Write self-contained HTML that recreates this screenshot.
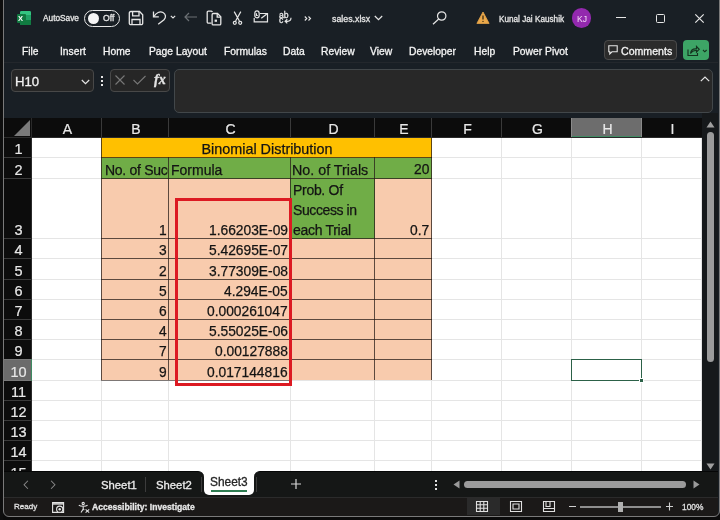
<!DOCTYPE html><html><head><meta charset="utf-8"><style>
*{margin:0;padding:0;box-sizing:border-box}
html,body{width:720px;height:520px;overflow:hidden;background:#0b0b0b}
body{position:relative;font-family:"Liberation Sans",sans-serif}
.a{position:absolute}
.t{position:absolute;white-space:nowrap;line-height:1;will-change:transform;-webkit-text-stroke:0.3px currentColor}
svg{position:absolute;overflow:visible}
.tab{color:#f4f4f4;font-size:10.3px}
.cell{will-change:transform;-webkit-text-stroke:0.25px currentColor;position:absolute;font-size:13.8px;color:#141414;line-height:1;white-space:nowrap}
.hd{will-change:transform;-webkit-text-stroke:0.2px currentColor;position:absolute;color:#e8e8e8;font-size:13px;line-height:1;white-space:nowrap;text-align:center}
</style></head><body>
<div class="a" style="left:0;top:0;width:3px;height:520px;background:#0e0e0e"></div>
<div class="a" style="left:3px;top:-6px;width:717px;height:523px;border-radius:6px;overflow:hidden;background:#191f25">
<div class="a" style="left:-3px;top:6px;width:720px;height:520px">
<div class="a" style="left:16px;top:11px;width:16px;height:14px"><div class="a" style="left:4px;top:0;width:11px;height:13.5px;background:#21a366;border-radius:1.5px"></div><div class="a" style="left:4px;top:0;width:11px;height:4px;background:#33c481;border-radius:1.5px 1.5px 0 0"></div><div class="a" style="left:4px;top:9px;width:11px;height:4.5px;background:#107c41;border-radius:0 0 1.5px 1.5px"></div><div class="a" style="left:1px;top:3px;width:8.5px;height:8.5px;background:#117a41;border-radius:1px"></div><div class="t" style="left:2.4px;top:3.9px;font-size:7.5px;color:#fff;font-weight:bold;-webkit-text-stroke:0">X</div></div>
<div class="t" style="left:43px;top:14.2px;font-size:8.3px;color:#e6e6e6">AutoSave</div>
<div class="a" style="left:84px;top:10px;width:36px;height:17px;border:1.2px solid #e6e6e6;border-radius:9px"></div>
<div class="a" style="left:87.5px;top:13px;width:11px;height:11px;border-radius:50%;background:#f4f4f4"></div>
<div class="t" style="left:102.5px;top:14px;font-size:8.6px;color:#e6e6e6">Off</div>
<svg style="left:128px;top:10px" width="16" height="16" viewBox="0 0 16 16" fill="none" stroke="#e6e6e6" stroke-width="1.3"><path d="M1.3 3a1.5 1.5 0 0 1 1.5-1.5h8.7l3.2 3.2v8.5a1.5 1.5 0 0 1-1.5 1.5h-10.4a1.5 1.5 0 0 1-1.5-1.5z"/><path d="M4.6 1.5v4.4h6.4v-4.4"/><path d="M4 14.7v-5.2h8v5.2"/></svg>
<svg style="left:152px;top:10px" width="16" height="16" viewBox="0 0 16 16" fill="none" stroke="#e6e6e6" stroke-width="1.3"><path d="M1.5 1.6V6.9H6.8"/><path d="M2 6.5C4 2.7 8 1 11 2.5C14 4.2 14.2 7.3 12 9.8L6.2 14.2"/></svg>
<svg style="left:169.5px;top:15px" width="6" height="4" viewBox="0 0 6 4" fill="none" stroke="#e6e6e6" stroke-width="1.1"><path d="M0.8 0.9L3 3L5.2 0.9"/></svg>
<svg style="left:184px;top:12px" width="14" height="10" viewBox="0 0 14 10" fill="none" stroke="#6c7075" stroke-width="1.2"><path d="M13 5H1M5 1L1 5L5 9"/></svg>
<svg style="left:206px;top:10px" width="17" height="16" viewBox="0 0 17 16" fill="none" stroke="#e6e6e6" stroke-width="1.3"><path d="M6.3 2.2A1.2 1.2 0 0 0 5.3 1.2H2.4A1.2 1.2 0 0 0 1.2 2.4V12a1.2 1.2 0 0 0 1.2 1.2h3"/><path d="M7.3 3.5h4.2l3.3 3.3v6.9a1.2 1.2 0 0 1-1.2 1.2H7.3a1.2 1.2 0 0 1-1.2-1.2V4.7a1.2 1.2 0 0 1 1.2-1.2z"/><path d="M11.2 3.5v3.6h3.6"/><rect x="8.6" y="9.6" width="2.4" height="2.2" fill="#e6e6e6" stroke="none"/></svg>
<svg style="left:232px;top:11px" width="11" height="14" viewBox="0 0 11 14" fill="none" stroke="#e6e6e6" stroke-width="1.2"><path d="M2.2 0.6L7.4 10M8.8 0.6L3.6 10"/><circle cx="2.8" cy="11.8" r="1.5"/><circle cx="8.2" cy="11.8" r="1.5"/></svg>
<svg style="left:253px;top:10px" width="16" height="13" viewBox="0 0 16 13" fill="none" stroke="#e6e6e6" stroke-width="1.2"><path d="M7 3.5H14.5V11.8H1.2V8"/><path d="M8.3 8.2L13.8 4"/><path d="M4 0.9C5.6 0.9 6.2 2 6.2 3.8V5.5C6.2 7 5.5 7.8 4 7.8C2.5 7.8 1.8 7 1.8 5.5V3.8C1.8 2 2.4 0.9 4 0.9z"/><path d="M3.4 3.2V5.5H4.8"/></svg>
<div class="t" style="left:279.3px;top:10.6px;font-size:8.6px;color:#e6e6e6">ab</div>
<div class="t" style="left:279.3px;top:16.4px;font-size:8.6px;color:#e6e6e6">c</div>
<svg style="left:284px;top:17px" width="8" height="7" viewBox="0 0 8 7" fill="none" stroke="#e6e6e6" stroke-width="1.2"><path d="M7 0.8C7 3.5 5.5 4.3 3.5 4.3H1.2M3.3 2.2L1.1 4.3L3.3 6.4"/></svg>
<svg style="left:304px;top:16px" width="8" height="5" viewBox="0 0 8 5" fill="none" stroke="#e6e6e6" stroke-width="1.1"><path d="M0.8 0.5L2.8 2.5L0.8 4.5M4.5 0.5L6.5 2.5L4.5 4.5"/></svg>
<div class="t" style="left:332px;top:15px;font-size:8.8px;color:#e6e6e6">sales.xlsx</div>
<svg style="left:374px;top:15px" width="9" height="6" viewBox="0 0 9 6" fill="none" stroke="#e6e6e6" stroke-width="1.2"><path d="M0.8 1L4.5 4.6L8.2 1"/></svg>
<svg style="left:432px;top:11px" width="15" height="14" viewBox="0 0 15 14" fill="none" stroke="#e6e6e6" stroke-width="1.2"><circle cx="9.7" cy="5" r="4.2"/><path d="M6.7 8L1 13.2"/></svg>
<svg style="left:476px;top:11px" width="14" height="13" viewBox="0 0 14 13"><path d="M7 1L13.1 12.4H0.9z" fill="#eba84a" stroke="#eba84a" stroke-width="0.8" stroke-linejoin="round"/><path d="M7 4.5v4" stroke="#3a2a10" stroke-width="1.3"/><circle cx="7" cy="10.4" r="0.7" fill="#3a2a10"/></svg>
<div class="t" style="left:498.5px;top:16px;font-size:8.2px;color:#e6e6e6">Kunal Jai Kaushik</div>
<div class="a" style="left:571.6px;top:8px;width:19.8px;height:20px;border-radius:50%;background:#9329ae"></div>
<div class="t" style="left:577px;top:14.6px;font-size:8.6px;color:#f3dcf6;-webkit-text-stroke:0">KJ</div>
<div class="a" style="left:616px;top:17px;width:10px;height:1.2px;background:#e6e6e6"></div>
<div class="a" style="left:656px;top:14px;width:9px;height:9px;border:1.2px solid #e6e6e6;border-radius:1.5px"></div>
<svg style="left:695px;top:13.5px" width="9" height="9" viewBox="0 0 9 9" stroke="#e6e6e6" stroke-width="1.2"><path d="M0.3 0.3L8.7 8.7M8.7 0.3L0.3 8.7"/></svg>
<div class="t tab" style="left:22px;top:47px">File</div>
<div class="t tab" style="left:60px;top:47px">Insert</div>
<div class="t tab" style="left:103px;top:47px">Home</div>
<div class="t tab" style="left:149px;top:47px">Page Layout</div>
<div class="t tab" style="left:224px;top:47px">Formulas</div>
<div class="t tab" style="left:283px;top:47px">Data</div>
<div class="t tab" style="left:321px;top:47px">Review</div>
<div class="t tab" style="left:370px;top:47px">View</div>
<div class="t tab" style="left:409px;top:47px">Developer</div>
<div class="t tab" style="left:474px;top:47px">Help</div>
<div class="t tab" style="left:513px;top:47px">Power Pivot</div>
<div class="a" style="left:604px;top:40px;width:73px;height:20px;border:1px solid #4a4a4a;border-radius:4px;background:#2b2b2b"></div>
<svg style="left:607.5px;top:44.5px" width="10" height="10" viewBox="0 0 10 10" fill="none" stroke="#e6e6e6" stroke-width="1.1"><path d="M0.8 0.8h8.4v6H4L1.8 9V6.8H0.8z"/></svg>
<div class="t tab" style="left:621px;top:45.5px;font-size:10.6px">Comments</div>
<div class="a" style="left:683px;top:40px;width:26px;height:20px;border-radius:4px;background:#3da566"></div>
<svg style="left:687px;top:45px" width="21" height="11" viewBox="0 0 21 11" fill="none" stroke="#15341f" stroke-width="1.15"><path d="M1 4.5v6h9.5V8"/><path d="M3.5 8.5C3.8 5.5 5.5 3.8 8.5 3.8h1V1.5L12.2 4.3L9.5 7V5.5h-1C6.5 5.5 4.8 6.5 3.5 8.5z"/><path d="M16 5l1.8 1.8L19.6 5"/></svg>
<div class="a" style="left:4px;top:62px;width:714px;height:1px;background:#23272c"></div>
<div class="a" style="left:11px;top:69px;width:83px;height:23px;border:1px solid #484848;border-radius:4px;background:#262626"></div>
<div class="t" style="left:15px;top:74.8px;font-size:13.2px;color:#f2f2f2">H10</div>
<svg style="left:80.5px;top:78.5px" width="9" height="6" viewBox="0 0 9 6" fill="none" stroke="#e6e6e6" stroke-width="1.2"><path d="M0.8 1L4.5 4.6L8.2 1"/></svg>
<div class="a" style="left:101px;top:76px;width:2px;height:2px;background:#e6e6e6"></div><div class="a" style="left:101px;top:80px;width:2px;height:2px;background:#e6e6e6"></div><div class="a" style="left:101px;top:84px;width:2px;height:2px;background:#e6e6e6"></div>
<div class="a" style="left:110px;top:69px;width:60px;height:23px;border:1px solid #484848;border-radius:4px;background:#262626"></div>
<svg style="left:115px;top:75px" width="10" height="10" viewBox="0 0 10 10" stroke="#777" stroke-width="1.1"><path d="M0.5 0.5L9.5 9.5M9.5 0.5L0.5 9.5"/></svg>
<svg style="left:133px;top:75px" width="13" height="10" viewBox="0 0 13 10" fill="none" stroke="#777" stroke-width="1.1"><path d="M0.5 5L4.5 9L12.5 1"/></svg>
<div class="t" style="left:153.5px;top:73px;font-family:'Liberation Serif',serif;font-style:italic;font-weight:bold;font-size:14px;color:#e2e2e2">fx</div>
<div class="a" style="left:174px;top:69px;width:539px;height:44px;border:1px solid #42474a;border-radius:5px;background:#282828"></div>
<svg style="left:700px;top:76px" width="10" height="6" viewBox="0 0 10 6" fill="none" stroke="#e6e6e6" stroke-width="1.2"><path d="M0.8 5.2L5 1L9.2 5.2"/></svg>
<div class="a" style="left:4px;top:118px;width:698px;height:19px;background:#0c0c0c"></div>
<div class="a" style="left:4px;top:118px;width:27px;height:353px;background:#0c0c0c"></div>
<svg style="left:14px;top:120px" width="16" height="16" viewBox="0 0 16 16"><path d="M16 0V16H0z" fill="#7a7a7a"/></svg>
<div class="a" style="left:572px;top:118px;width:69px;height:19px;background:#6d6d6d;border-bottom:1px solid #3f8a62"></div>
<div class="a" style="left:101px;top:118px;width:1px;height:19px;background:#3a3a3a"></div>
<div class="a" style="left:168px;top:118px;width:1px;height:19px;background:#3a3a3a"></div>
<div class="a" style="left:290px;top:118px;width:1px;height:19px;background:#3a3a3a"></div>
<div class="a" style="left:374px;top:118px;width:1px;height:19px;background:#3a3a3a"></div>
<div class="a" style="left:431px;top:118px;width:1px;height:19px;background:#3a3a3a"></div>
<div class="a" style="left:501px;top:118px;width:1px;height:19px;background:#3a3a3a"></div>
<div class="a" style="left:571px;top:118px;width:1px;height:19px;background:#3a3a3a"></div>
<div class="a" style="left:641px;top:118px;width:1px;height:19px;background:#3a3a3a"></div>
<div class="a" style="left:4px;top:157px;width:27px;height:1px;background:#3a3a3a"></div>
<div class="a" style="left:4px;top:178px;width:27px;height:1px;background:#3a3a3a"></div>
<div class="a" style="left:4px;top:238px;width:27px;height:1px;background:#3a3a3a"></div>
<div class="a" style="left:4px;top:258px;width:27px;height:1px;background:#3a3a3a"></div>
<div class="a" style="left:4px;top:279px;width:27px;height:1px;background:#3a3a3a"></div>
<div class="a" style="left:4px;top:299px;width:27px;height:1px;background:#3a3a3a"></div>
<div class="a" style="left:4px;top:319px;width:27px;height:1px;background:#3a3a3a"></div>
<div class="a" style="left:4px;top:339px;width:27px;height:1px;background:#3a3a3a"></div>
<div class="a" style="left:4px;top:359px;width:27px;height:1px;background:#3a3a3a"></div>
<div class="a" style="left:4px;top:380px;width:27px;height:1px;background:#3a3a3a"></div>
<div class="a" style="left:4px;top:400px;width:27px;height:1px;background:#3a3a3a"></div>
<div class="a" style="left:4px;top:420px;width:27px;height:1px;background:#3a3a3a"></div>
<div class="a" style="left:4px;top:440px;width:27px;height:1px;background:#3a3a3a"></div>
<div class="a" style="left:4px;top:460px;width:27px;height:1px;background:#3a3a3a"></div>
<div class="a" style="left:31px;top:118px;width:1px;height:353px;background:#2a2a2a"></div>
<div class="a" style="left:4px;top:137px;width:698px;height:1px;background:#2a2a2a"></div>
<div class="a" style="left:4px;top:359px;width:27px;height:22px;background:#6b6b6b;border-top:1px solid #7a7a7a;border-bottom:1px solid #7a7a7a"></div>
<div class="a" style="left:31px;top:359px;width:1px;height:22px;background:#3f8a62"></div>
<div class="a" style="left:571px;top:118px;width:1px;height:19px;background:#8a8a8a"></div><div class="a" style="left:641px;top:118px;width:1px;height:19px;background:#8a8a8a"></div>
<div class="hd" style="left:33px;top:121.5px;width:69px;font-size:14px">A</div>
<div class="hd" style="left:103px;top:121.5px;width:66px;font-size:14px">B</div>
<div class="hd" style="left:170px;top:121.5px;width:121px;font-size:14px">C</div>
<div class="hd" style="left:292px;top:121.5px;width:83px;font-size:14px">D</div>
<div class="hd" style="left:376px;top:121.5px;width:56px;font-size:14px">E</div>
<div class="hd" style="left:433px;top:121.5px;width:69px;font-size:14px">F</div>
<div class="hd" style="left:503px;top:121.5px;width:69px;font-size:14px">G</div>
<div class="hd" style="left:573px;top:121.5px;width:69px;font-size:14px">H</div>
<div class="hd" style="left:643px;top:121.5px;width:59px;font-size:14px">I</div>
<div class="hd" style="left:4.7px;top:142.03px;width:27px;font-size:14.5px">1</div>
<div class="hd" style="left:4.7px;top:163.03px;width:27px;font-size:14.5px">2</div>
<div class="hd" style="left:4.7px;top:223.03px;width:27px;font-size:14.5px">3</div>
<div class="hd" style="left:4.7px;top:243.03px;width:27px;font-size:14.5px">4</div>
<div class="hd" style="left:4.7px;top:264.03px;width:27px;font-size:14.5px">5</div>
<div class="hd" style="left:4.7px;top:284.03px;width:27px;font-size:14.5px">6</div>
<div class="hd" style="left:4.7px;top:304.03px;width:27px;font-size:14.5px">7</div>
<div class="hd" style="left:4.7px;top:324.03px;width:27px;font-size:14.5px">8</div>
<div class="hd" style="left:4.7px;top:344.03px;width:27px;font-size:14.5px">9</div>
<div class="hd" style="left:4.7px;top:365.03px;width:27px;font-size:14.5px">10</div>
<div class="hd" style="left:4.7px;top:385.03px;width:27px;font-size:14.5px">11</div>
<div class="hd" style="left:4.7px;top:405.03px;width:27px;font-size:14.5px">12</div>
<div class="hd" style="left:4.7px;top:425.03px;width:27px;font-size:14.5px">13</div>
<div class="hd" style="left:4.7px;top:445.03px;width:27px;font-size:14.5px">14</div>
<div class="hd" style="left:4.7px;top:466.03px;width:27px;font-size:14.5px">15</div>
<div class="a" style="left:32px;top:138px;width:670px;height:333px;background:#fff;overflow:hidden">
<div class="a" style="left:-32px;top:-138px;width:720px;height:520px">
<div class="a" style="left:101px;top:138px;width:1px;height:333px;background:#e5e5e5"></div>
<div class="a" style="left:168px;top:138px;width:1px;height:333px;background:#e5e5e5"></div>
<div class="a" style="left:290px;top:138px;width:1px;height:333px;background:#e5e5e5"></div>
<div class="a" style="left:374px;top:138px;width:1px;height:333px;background:#e5e5e5"></div>
<div class="a" style="left:431px;top:138px;width:1px;height:333px;background:#e5e5e5"></div>
<div class="a" style="left:501px;top:138px;width:1px;height:333px;background:#e5e5e5"></div>
<div class="a" style="left:571px;top:138px;width:1px;height:333px;background:#e5e5e5"></div>
<div class="a" style="left:641px;top:138px;width:1px;height:333px;background:#e5e5e5"></div>
<div class="a" style="left:701px;top:138px;width:1px;height:333px;background:#e5e5e5"></div>
<div class="a" style="left:32px;top:157px;width:670px;height:1px;background:#e5e5e5"></div>
<div class="a" style="left:32px;top:178px;width:670px;height:1px;background:#e5e5e5"></div>
<div class="a" style="left:32px;top:238px;width:670px;height:1px;background:#e5e5e5"></div>
<div class="a" style="left:32px;top:258px;width:670px;height:1px;background:#e5e5e5"></div>
<div class="a" style="left:32px;top:279px;width:670px;height:1px;background:#e5e5e5"></div>
<div class="a" style="left:32px;top:299px;width:670px;height:1px;background:#e5e5e5"></div>
<div class="a" style="left:32px;top:319px;width:670px;height:1px;background:#e5e5e5"></div>
<div class="a" style="left:32px;top:339px;width:670px;height:1px;background:#e5e5e5"></div>
<div class="a" style="left:32px;top:359px;width:670px;height:1px;background:#e5e5e5"></div>
<div class="a" style="left:32px;top:380px;width:670px;height:1px;background:#e5e5e5"></div>
<div class="a" style="left:32px;top:400px;width:670px;height:1px;background:#e5e5e5"></div>
<div class="a" style="left:32px;top:420px;width:670px;height:1px;background:#e5e5e5"></div>
<div class="a" style="left:32px;top:440px;width:670px;height:1px;background:#e5e5e5"></div>
<div class="a" style="left:32px;top:460px;width:670px;height:1px;background:#e5e5e5"></div>
<div class="a" style="left:101px;top:137px;width:331px;height:243px;background:#f8cbad"></div>
<div class="a" style="left:101px;top:137px;width:331px;height:21px;background:#ffc000"></div>
<div class="a" style="left:101px;top:158px;width:331px;height:21px;background:#70ad47"></div>
<div class="a" style="left:290px;top:179px;width:85px;height:60px;background:#70ad47"></div>
<div class="a" style="left:101px;top:157px;width:1px;height:223px;background:rgba(40,30,25,0.75)"></div>
<div class="a" style="left:168px;top:157px;width:1px;height:223px;background:rgba(40,30,25,0.75)"></div>
<div class="a" style="left:290px;top:157px;width:1px;height:223px;background:rgba(40,30,25,0.75)"></div>
<div class="a" style="left:374px;top:157px;width:1px;height:223px;background:rgba(40,30,25,0.75)"></div>
<div class="a" style="left:431px;top:157px;width:1px;height:223px;background:rgba(40,30,25,0.75)"></div>
<div class="a" style="left:101px;top:137px;width:1px;height:21px;background:rgba(40,30,25,0.75)"></div>
<div class="a" style="left:431px;top:137px;width:1px;height:21px;background:rgba(40,30,25,0.75)"></div>
<div class="a" style="left:101px;top:137px;width:331px;height:1px;background:rgba(40,30,25,0.75)"></div>
<div class="a" style="left:101px;top:157px;width:331px;height:1px;background:rgba(40,30,25,0.75)"></div>
<div class="a" style="left:101px;top:178px;width:331px;height:1px;background:rgba(40,30,25,0.75)"></div>
<div class="a" style="left:101px;top:238px;width:331px;height:1px;background:rgba(40,30,25,0.75)"></div>
<div class="a" style="left:101px;top:258px;width:331px;height:1px;background:rgba(40,30,25,0.75)"></div>
<div class="a" style="left:101px;top:279px;width:331px;height:1px;background:rgba(40,30,25,0.75)"></div>
<div class="a" style="left:101px;top:299px;width:331px;height:1px;background:rgba(40,30,25,0.75)"></div>
<div class="a" style="left:101px;top:319px;width:331px;height:1px;background:rgba(40,30,25,0.75)"></div>
<div class="a" style="left:101px;top:339px;width:331px;height:1px;background:rgba(40,30,25,0.75)"></div>
<div class="a" style="left:101px;top:359px;width:331px;height:1px;background:rgba(40,30,25,0.75)"></div>
<div class="a" style="left:101px;top:380px;width:190px;height:1px;background:rgba(40,30,25,0.55)"></div>
<div class="a" style="left:291px;top:380px;width:141px;height:1px;background:#e5e5e5"></div>
<div class="cell" style="left:166.5px;width:200px;text-align:center;top:142.01px;font-size:14.4px">Binomial Distribution</div>
<div class="a" style="left:102px;top:158px;width:66px;height:20px;overflow:hidden"><div class="cell" style="left:3px;top:4.85px;font-size:14px;letter-spacing:-0.3px">No. of Success</div></div>
<div class="cell" style="left:170.8px;top:162.85px;font-size:14px">Formula</div>
<div class="cell" style="left:292px;top:162.60px;font-size:14.3px">No. of Trials</div>
<div class="cell" style="right:290.7px;top:163.32px;font-size:13.8px">20</div>
<div class="cell" style="left:293.2px;top:183.05px;font-size:14px;letter-spacing:-0.3px">Prob. Of</div>
<div class="cell" style="left:293.2px;top:203.30px;font-size:14px;letter-spacing:-0.4px">Success in</div>
<div class="cell" style="left:293.2px;top:223.30px;font-size:14px;letter-spacing:-0.3px">each Trial</div>
<div class="cell" style="right:290.7px;top:224.02px;font-size:13.8px">0.7</div>
<div class="cell" style="right:553.2px;top:224.02px;font-size:13.8px">1</div>
<div class="cell" style="right:432px;top:224.02px;font-size:13.8px">1.66203E-09</div>
<div class="cell" style="right:553.2px;top:244.02px;font-size:13.8px">3</div>
<div class="cell" style="right:432px;top:244.02px;font-size:13.8px">5.42695E-07</div>
<div class="cell" style="right:553.2px;top:265.02px;font-size:13.8px">2</div>
<div class="cell" style="right:432px;top:265.02px;font-size:13.8px">3.77309E-08</div>
<div class="cell" style="right:553.2px;top:285.02px;font-size:13.8px">5</div>
<div class="cell" style="right:432px;top:285.02px;font-size:13.8px">4.294E-05</div>
<div class="cell" style="right:553.2px;top:305.02px;font-size:13.8px">6</div>
<div class="cell" style="right:432px;top:305.02px;font-size:13.8px">0.000261047</div>
<div class="cell" style="right:553.2px;top:325.02px;font-size:13.8px">4</div>
<div class="cell" style="right:432px;top:325.02px;font-size:13.8px">5.55025E-06</div>
<div class="cell" style="right:553.2px;top:345.02px;font-size:13.8px">7</div>
<div class="cell" style="right:432px;top:345.02px;font-size:13.8px">0.00127888</div>
<div class="cell" style="right:553.2px;top:366.02px;font-size:13.8px">9</div>
<div class="cell" style="right:432px;top:366.02px;font-size:13.8px">0.017144816</div>
<div class="a" style="left:175px;top:198px;width:117px;height:188px;border:3px solid #dc1a22"></div>
<div class="a" style="left:571px;top:359px;width:71px;height:22px;border:1.6px solid #2c6148"></div>
<div class="a" style="left:638.5px;top:377.5px;width:5px;height:5px;background:#2c6148;border:1px solid #fff"></div>
</div></div>
<div class="a" style="left:702px;top:113px;width:16px;height:358px;background:#16191b"></div>
<svg style="left:706px;top:121px" width="9" height="7" viewBox="0 0 9 7"><path d="M4.5 0.5L8.5 6.5H0.5z" fill="#a0a0a0"/></svg>
<div class="a" style="left:707px;top:132px;width:7px;height:230px;border-radius:3.5px;background:#9b9b9b"></div>
<svg style="left:706px;top:463px" width="9" height="7" viewBox="0 0 9 7"><path d="M4.5 6.5L8.5 0.5H0.5z" fill="#a0a0a0"/></svg>
<div class="a" style="left:4px;top:471px;width:714px;height:26px;background:#151716"></div>
<div class="a" style="left:190px;top:471px;width:80px;height:10px;background:#fff"></div>
<div class="a" style="left:4px;top:471px;width:200px;height:26px;background:#151716;border-top:1.2px solid #050606;border-top-right-radius:6px"></div>
<div class="a" style="left:254px;top:471px;width:464px;height:26px;background:#151716;border-top:1.2px solid #050606;border-top-left-radius:6px"></div>
<div class="a" style="left:204px;top:471px;width:50px;height:24px;background:#fff;border-radius:0 0 5px 5px"></div>
<svg style="left:23px;top:479.5px" width="6" height="9.5" viewBox="0 0 6 10" fill="none" stroke="#8a8a8a" stroke-width="1.1"><path d="M5 0.8L1 5L5 9.2"/></svg>
<svg style="left:49.5px;top:479.5px" width="6" height="9.5" viewBox="0 0 6 10" fill="none" stroke="#8a8a8a" stroke-width="1.1"><path d="M1 0.8L5 5L1 9.2"/></svg>
<div class="t" style="left:101px;top:479.6px;font-size:11.3px;color:#ececec">Sheet1</div>
<div class="a" style="left:145px;top:477px;width:1px;height:15px;background:#3c3c3c"></div>
<div class="t" style="left:156px;top:479.6px;font-size:11.3px;color:#ececec">Sheet2</div>
<div class="a" style="left:201px;top:477px;width:1px;height:15px;background:#3c3c3c"></div>
<div class="t" style="left:210.3px;top:477.4px;font-size:11.9px;color:#262626">Sheet3</div>
<div class="a" style="left:211px;top:490px;width:36px;height:2px;background:#2f7d52"></div>
<div class="a" style="left:256px;top:477px;width:1px;height:15px;background:#3c3c3c"></div>
<svg style="left:291px;top:479px" width="10" height="10" viewBox="0 0 10 10" stroke="#d8d8d8" stroke-width="1.2"><path d="M5 0v10M0 5h10"/></svg>
<div class="a" style="left:435px;top:480px;width:2px;height:2px;background:#e0e0e0"></div><div class="a" style="left:435px;top:484px;width:2px;height:2px;background:#e0e0e0"></div><div class="a" style="left:435px;top:488px;width:2px;height:2px;background:#e0e0e0"></div>
<svg style="left:453px;top:480px" width="7" height="9" viewBox="0 0 7 9"><path d="M0.5 4.5L6.5 0.5V8.5z" fill="#9a9a9a"/></svg>
<div class="a" style="left:464px;top:480.5px;width:222px;height:7px;border-radius:3.5px;background:#9b9b9b"></div>
<svg style="left:693px;top:480px" width="7" height="9" viewBox="0 0 7 9"><path d="M6.5 4.5L0.5 0.5V8.5z" fill="#9a9a9a"/></svg>
<div class="a" style="left:4px;top:497px;width:714px;height:1px;background:#2b2b2b"></div>
<div class="a" style="left:4px;top:498px;width:714px;height:20px;background:#1b1918"></div>
<div class="t" style="left:13.5px;top:503px;font-size:8px;color:#e0e0e0">Ready</div>
<svg style="left:52px;top:502px" width="13" height="11" viewBox="0 0 13 11" fill="none" stroke="#e4e4e4" stroke-width="1.1"><path d="M0.6 0.6h11v9.8h-11z"/><rect x="0.6" y="0.6" width="11" height="2.2" fill="#e4e4e4" stroke="none" opacity="0.8"/><circle cx="7.7" cy="7.2" r="3.1" fill="#1b1918"/><circle cx="7.7" cy="7.2" r="1.2" fill="#e4e4e4" stroke="none"/></svg>
<svg style="left:77.5px;top:502px" width="12" height="11" viewBox="0 0 12 11" fill="none" stroke="#e4e4e4" stroke-width="1.1"><circle cx="5.2" cy="1.5" r="1.1"/><path d="M0.8 3.2C2.5 4.6 7.9 4.6 9.6 3.2"/><path d="M5.2 4.4V7L3 10.5"/><path d="M5.2 7L6.3 8.2"/><path d="M7.6 7.4L11.2 10.6M11.2 7.4L7.6 10.6"/></svg>
<div class="t" style="left:92px;top:503px;font-size:8.6px;font-weight:bold;color:#e8e8e8">Accessibility: Investigate</div>
<div class="a" style="left:467px;top:498px;width:33px;height:17px;background:#2a2a2a"></div>
<svg style="left:476px;top:501px" width="12" height="11" viewBox="0 0 12 11" fill="none" stroke="#e0e0e0" stroke-width="1.1"><path d="M0.5 0.5h11v10h-11zM4.2 0.5v10M7.8 0.5v10M0.5 3.8h11M0.5 7.2h11"/></svg>
<svg style="left:510px;top:501px" width="12" height="11" viewBox="0 0 12 11" fill="none" stroke="#e0e0e0" stroke-width="1.1"><path d="M0.5 0.5h11v10h-11zM3 3h6v5h-6z"/></svg>
<svg style="left:543px;top:501px" width="12" height="11" viewBox="0 0 12 11" fill="none" stroke="#e0e0e0" stroke-width="1.1"><path d="M0.5 0.5h11v10h-11zM3 0.5v5h4v-5M0.5 7.5h11"/></svg>
<div class="a" style="left:569px;top:506px;width:7px;height:1.2px;background:#d0d0d0"></div>
<div class="a" style="left:580px;top:506px;width:81px;height:1.5px;background:#8e8e8e"></div>
<div class="a" style="left:618px;top:502px;width:5px;height:10px;background:#b0b0b0"></div>
<svg style="left:665.5px;top:502px" width="7" height="9" viewBox="0 0 7 9" stroke="#d0d0d0" stroke-width="1.1"><path d="M3.5 0.5v8M0 4.5h7"/></svg>
<div class="t" style="left:682px;top:503px;font-size:8.4px;color:#e0e0e0">100%</div>
</div></div>
<div class="a" style="left:3px;top:-6px;width:717px;height:523px;border:1.5px solid #7a7a7a;border-radius:6px"></div>
</body></html>
